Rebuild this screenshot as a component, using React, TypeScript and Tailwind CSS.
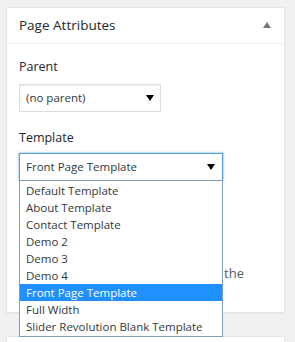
const templates = [
  'Default Template',
  'About Template',
  'Contact Template',
  'Demo 2',
  'Demo 3',
  'Demo 4',
  'Front Page Template',
  'Full Width',
  'Slider Revolution Blank Template',
];

const Caret = ({ color = '#000' }: { color?: string }) => (
  <svg width="8" height="6" viewBox="0 0 8 6" aria-hidden>
    <path d="M0 0 H8 L4 6 Z" fill={color} />
  </svg>
);

const App = () => {
  return (
    <div className="h-[342px] w-[295px] overflow-hidden bg-[#f1f1f1] pt-[7px] pl-[6px]" style={{ fontFamily: '"Open Sans", "Noto Sans", sans-serif' }}>
      {/* Page Attributes box */}
      <section className="relative w-[279px] border border-[#e5e5e5] bg-white shadow-[0_1px_1px_rgba(0,0,0,0.04)]">
        <header className="flex h-[36px] items-center justify-between border-b border-[#eeeeee] px-[12px]">
          <h2 className="text-[13.5px] text-[#23282d]">Page Attributes</h2>
          <span className="mr-[1px] mt-[-2px] rotate-180">
            <Caret color="#72777c" />
          </span>
        </header>

        <div className="px-[12px] pt-[13px] pb-[29px] text-[#23282d]">
          <p className="text-[12.5px] leading-[20px]">Parent</p>
          <div className="mt-[7px] flex h-[28px] w-[142px] items-center justify-between border border-[#dddddd] pl-[6px] pr-[6px] text-[11.5px] text-[#32373c] shadow-[inset_0_1px_2px_rgba(0,0,0,0.07)]">
            <span>(no parent)</span>
            <Caret />
          </div>

          <p className="mt-[16px] text-[12.5px] leading-[20px]">Template</p>
          <div className="relative mt-[5px] w-[204px]">
            <div className="flex h-[28px] items-center justify-between border border-[#5b9dd9] pl-[6px] pr-[7px] text-[11.5px] text-[#32373c] shadow-[0_0_2px_rgba(30,140,190,0.8)]">
              <span>Front Page Template</span>
              <Caret />
            </div>

            {/* open option list */}
            <ul className="absolute left-0 top-[27px] z-10 w-[204px] border border-[#7f9db9] bg-white py-[1px] text-[11.5px] text-[#32373c]">
              {templates.map((t) => (
                <li
                  key={t}
                  className={
                    t === 'Front Page Template'
                      ? 'h-[17px] bg-[#1e90ff] pl-[6px] leading-[17px] text-white'
                      : 'h-[17px] pl-[6px] leading-[17px]'
                  }
                >
                  {t}
                </li>
              ))}
            </ul>
          </div>

          {/* help text, mostly hidden behind the open list */}
          <p className="mt-[82px] w-[225px] overflow-hidden whitespace-nowrap text-right text-[13px] leading-[20px] text-[#555d66]">
            <span className="text-[#e0a23b]">Help:</span> you can change the
          </p>
        </div>
      </section>

      <section className="mt-[23px] h-[20px] w-[279px] border border-[#e5e5e5] bg-white" />
    </div>
  );
};

export default App;
